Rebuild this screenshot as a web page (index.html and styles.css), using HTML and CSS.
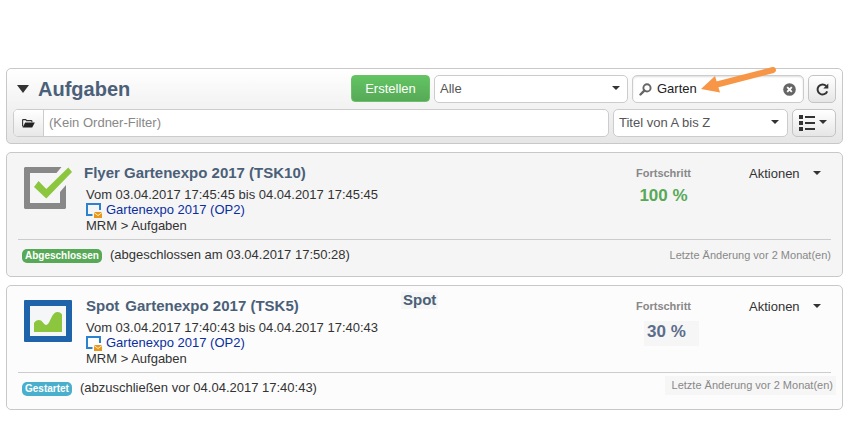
FILE: index.html
```html
<!DOCTYPE html>
<html lang="de">
<head>
<meta charset="utf-8">
<title>Aufgaben</title>
<link rel="stylesheet" href="styles.css">
</head>
<body>
<main class="page">
  <header class="toolbar">
    <div class="row">
      <h1 class="heading"><i class="fold"></i>Aufgaben</h1>
      <button class="create">Erstellen</button>
      <div class="field scope"><span>Alle</span><i class="caret"></i></div>
      <div class="field search">
        <svg class="lens" width="13" height="13" viewBox="0 0 13 13"><circle cx="8" cy="4.9" r="3.6" fill="none" stroke="#666" stroke-width="1.9"/><path d="M5.3 7.7 1.5 11.5" stroke="#666" stroke-width="2.4" stroke-linecap="round"/></svg>
        <span class="query">Garten</span>
        <svg class="clear" width="13" height="13" viewBox="0 0 13 13"><circle cx="6.5" cy="6.5" r="6.3" fill="#666"/><path d="m4.2 4.2 4.6 4.6m0-4.6L4.2 8.8" stroke="#fff" stroke-width="1.9"/></svg>
      </div>
      <button class="tool refresh"><svg width="13" height="13" viewBox="0 0 13 13"><path d="M10.2 3A5 5 0 1 0 11.2 8.300" fill="none" stroke="#333" stroke-width="2"/><path d="M12.300.6v5H7.300z" fill="#333"/></svg></button>
    </div>
    <div class="row second">
      <div class="folder">
        <span class="folder-button"><svg width="13" height="9" viewBox="0 0 13 9"><path d="M.6 7.6V1.2Q.6.6 1.2.6h2.6l.8 1h4.6q.7 0 .7.7v1" fill="none" stroke="#333" stroke-width="1.1"/><path d="M3.2 3.4h9.6L10.2 8.4H.6z" fill="#222"/></svg></span>
        <span class="folder-text">(Kein Ordner-Filter)</span>
      </div>
      <div class="field sort"><span>Titel von A bis Z</span><i class="caret"></i></div>
      <button class="tool view"><svg width="16" height="16" viewBox="0 0 16 16"><path d="M0 0h4v4H0zM0 6h4v4H0zM0 12h4v4H0zM6 1h10v2H6zM6 7h10v2H6zM6 13h10v2H6z" fill="#333"/></svg><i class="caret"></i></button>
    </div>
    <svg class="pointer" width="80" height="32" viewBox="0 0 80 32"><path d="M73 5 17 19.5" stroke="#f79646" stroke-width="6" stroke-linecap="round"/><path d="M1 24 15 11l5 16.5z" fill="#f79646"/></svg>
  </header>

  <article class="card done">
    <div class="main">
      <svg class="icon" width="48" height="42" viewBox="0 0 48 42"><path d="M37.500 0H1L0 1v40l1 1h40l1-1V18l-6 7v11H6V6h26.500z" fill="#888"/><path d="m10 20 4.500-6 7.800 8L44.300.5 48 5 22.300 31.500z" fill="#8cc63f"/></svg>
      <div class="info">
        <h2 class="title">Flyer Gartenexpo 2017 (TSK10)</h2>
        <p class="line">Vom 03.04.2017 17:45:45 bis 04.04.2017 17:45:45</p>
        <p class="line link"><svg width="16" height="15" viewBox="0 0 16 15"><path d="M6.500 12H1V1h13v6" fill="none" stroke="#2b83d0" stroke-width="2"/><path d="M8 9h8v6H8z" fill="#e8971c"/><path d="m8 9.500 4 3 4-3" fill="none" stroke="#fff0c8"/></svg><a>Gartenexpo 2017 (OP2)</a></p>
        <p class="line">MRM &gt; Aufgaben</p>
      </div>
      <div class="progress"><span class="label">Fortschritt</span><strong class="value">100 %</strong></div>
      <div class="actions">Aktionen<i class="caret"></i></div>
    </div>
    <footer class="foot"><span class="badge">Abgeschlossen</span><span class="state">(abgeschlossen am 03.04.2017 17:50:28)</span><span class="changed">Letzte Änderung vor 2 Monat(en)</span></footer>
  </article>

  <article class="card started">
    <div class="main">
      <svg class="icon" width="48" height="42" viewBox="0 0 48 42"><rect width="48" height="42" rx="1" fill="#1f63aa"/><path d="M6 6h36v30H6z" fill="#f5f6f7"/><path d="M10 32V23C12 19.500 16.500 18.500 19 22.500c2 3 4 3.500 6 0C27.500 18 29 12 33.500 12 36 12 37 13 38 14.500V32z" fill="#8cc63f"/></svg>
      <div class="info">
        <h2 class="title"><span class="first">Spot</span>Gartenexpo 2017 (TSK5)</h2>
        <p class="line">Vom 03.04.2017 17:40:43 bis 04.04.2017 17:40:43</p>
        <p class="line link"><svg width="16" height="15" viewBox="0 0 16 15"><path d="M6.500 12H1V1h13v6" fill="none" stroke="#2b83d0" stroke-width="2"/><path d="M8 9h8v6H8z" fill="#e8971c"/><path d="m8 9.500 4 3 4-3" fill="none" stroke="#fff0c8"/></svg><a>Gartenexpo 2017 (OP2)</a></p>
        <p class="line">MRM &gt; Aufgaben</p>
      </div>
      <span class="tag">Spot</span>
      <div class="progress"><span class="label">Fortschritt</span><strong class="value">30 %</strong></div>
      <div class="actions">Aktionen<i class="caret"></i></div>
    </div>
    <footer class="foot"><span class="badge">Gestartet</span><span class="state">(abzuschließen vor 04.04.2017 17:40:43)</span><span class="changed">Letzte Änderung vor 2 Monat(en)</span></footer>
  </article>
</main>
</body>
</html>
```
FILE: styles.css
```css
* { box-sizing: border-box; }
body { margin: 0; background: #fff; color: #333; font: 13px/16px "Liberation Sans", Arial, sans-serif; }
h1, h2, p { margin: 0; }
svg { display: block; flex: none; }
.page { width: 843px; padding: 68px 0 0 6px; white-space: nowrap; }

.toolbar { position: relative; height: 76px; padding: 6px 6px 0; border: 1px solid #c8c8c8; border-radius: 5px; background: linear-gradient(#fff, #e6e6e6); }
.row { display: flex; height: 28px; gap: 4px; }
.second { margin-top: 6px; }
.heading { display: flex; align-items: center; flex: 1; padding-left: 4px; color: #4a6078; font-size: 20px; line-height: 28px; }
.fold { margin-right: 9px; border: 6px solid transparent; border-top: 8px solid #333; border-bottom: 0; }
.create { width: 79px; height: 27px; padding: 1px 0 0; border: 1px solid #6cc067; border-radius: 4px; background: linear-gradient(#62c462, #57a957); color: #fff; font: inherit; }
.field { display: flex; align-items: center; padding: 0 7px 1px 5px; border: 1px solid #ccc; border-radius: 5px; background: #fff; color: #555; }
.caret { width: 8px; border: 4px solid transparent; border-top-color: #333; border-bottom: 0; }
.field .caret { margin: 0 0 1px auto; }
.scope { width: 194px; }
.search { width: 172px; padding: 0 7px 0 6px; box-shadow: inset 0 1px 2px #ddd; color: #222; }
.query { flex: 1; padding-left: 5px; }
.tool { display: flex; align-items: center; justify-content: center; width: 28px; padding: 0; border: 1px solid #c4c4c4; border-radius: 5px; background: linear-gradient(#fff, #e6e6e6); }
.folder { display: flex; flex: 1; overflow: hidden; border: 1px solid #ccc; border-radius: 5px; background: #fff; }
.folder-button { display: flex; align-items: center; justify-content: center; width: 30px; border-right: 1px solid #ccc; background: linear-gradient(#fff, #e8e8e8); }
.folder-text { padding: 5px 0 0 5px; color: #888; }
.sort { width: 175px; padding-right: 8px; }
.view { width: 44px; gap: 4px; padding-right: 2px; }
.view .caret { margin-bottom: 2px; }
.pointer { position: absolute; left: 693px; top: -4px; }

.card { height: 125px; border: 1px solid #c8c8c8; border-radius: 5px; padding: 0 11px; }
.done { margin-top: 8px; background: #f5f5f5; }
.started { margin-top: 8px; background: #fcfcfc; }
.main { display: flex; height: 87px; border-bottom: 1px solid #ccc; }
.icon { margin: 14px 0 0 6px; }
.info { width: 310px; margin-left: 12px; padding-top: 11px; }
.title { height: 23px; color: #4a6078; font-size: 15px; line-height: 18px; }
.first { margin: 0 6px 0 2px; }
.line { height: 16px; padding-left: 2px; }
.link { display: flex; height: 15px; gap: 4px; line-height: 14px; color: #0a2ea0; }
.tag { width: 37px; height: 17px; margin: 6px 0 0 7px; padding-left: 2px; background: #f6f6f6; color: #4a6078; font-size: 15px; font-weight: bold; line-height: 16px; }
.progress { display: flex; flex-direction: column; align-items: center; width: 55px; margin-left: auto; padding-top: 13px; }
.label { color: #888; font-size: 11px; font-weight: bold; line-height: 14px; }
.value { margin-top: 5px; color: #57a957; font-size: 17px; line-height: 22px; }
.actions { display: flex; align-items: center; width: 82px; height: 16px; margin: 13px 0 0 58px; }
.actions .caret { margin: 0 0 2px 13px; }
.foot { display: flex; height: 36px; padding-left: 4px; }
.badge { height: 14px; margin-top: 9px; padding: 0 3px; border-radius: 5px; background: #57a957; color: #fff; font-size: 10px; font-weight: bold; line-height: 14px; }
.state { margin: 7px 0 0 8px; }
.changed { margin: 7px 0 0 auto; color: #888; font-size: 11px; line-height: 16px; }
.started .badge { background: #49afcd; }
.started .value { width: 55px; height: 25px; margin: 8px -10px 0 8px; padding-left: 3px; align-self: flex-start; background: #f6f6f6; color: #5c6d8c; line-height: 22px; }
.started .changed { height: 19px; margin: 3px -5px 0 auto; padding: 0 3px 0 7px; background: #f6f6f6; line-height: 18px; }
```
